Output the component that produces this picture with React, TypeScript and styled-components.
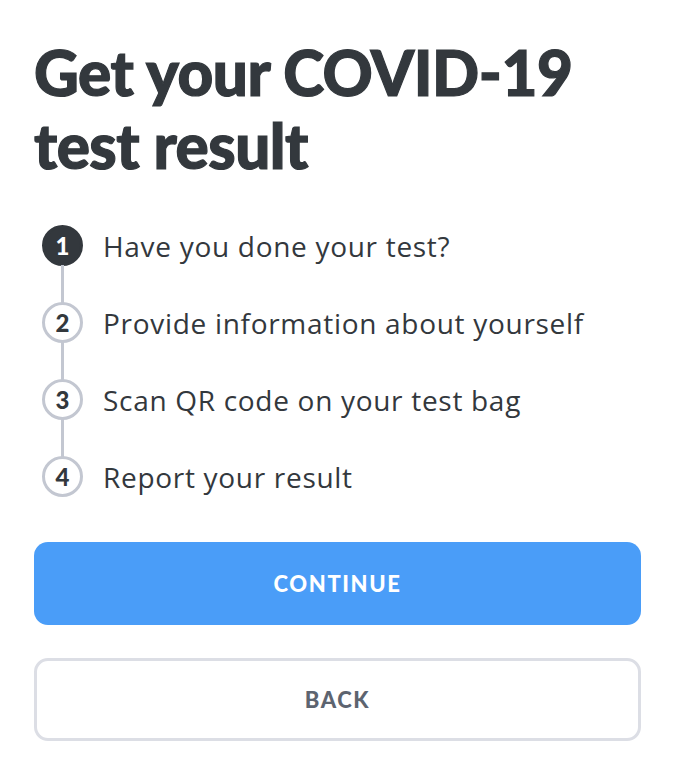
import React from "react";
import styled, { createGlobalStyle } from "styled-components";

const GlobalStyle = createGlobalStyle`
  html, body {
    margin: 0;
    padding: 0;
    background: #ffffff;
  }
  body {
    font-family: Lato, "Open Sans", sans-serif;
    color: #33383d;
  }
`;

const steps = [
  "Have you done your test?",
  "Provide information about yourself",
  "Scan QR code on your test bag",
  "Report your result",
];

const App = () => (
  <>
    <GlobalStyle />
    <Page>
      <Title>Get your COVID-19 test result</Title>
      <StepList>
        {steps.map((label, i) => (
          <Step key={label} $last={i === steps.length - 1}>
            <StepBadge $active={i === 0}>{i + 1}</StepBadge>
            <StepLabel>{label}</StepLabel>
          </Step>
        ))}
      </StepList>
      <Actions>
        <Button $primary>Continue</Button>
        <Button>Back</Button>
      </Actions>
    </Page>
  </>
);

export default App;

const Page = styled.main`
  display: flex;
  flex-direction: column;
  padding: 36px 45px 32px 34px;
`;

const Title = styled.h1`
  margin: 0;
  width: 560px;
  font-size: 62px;
  font-weight: 900;
  line-height: 73px;
  letter-spacing: -0.5px;
  color: #33383d;
  -webkit-text-stroke: 1.2px #33383d;
`;

const StepList = styled.ol`
  list-style: none;
  margin: 25px 0 0;
  padding: 0 0 0 8px;
  display: flex;
  flex-direction: column;
`;

const Step = styled.li<{ $last?: boolean }>`
  position: relative;
  display: flex;
  align-items: center;
  gap: 20px;
  height: 77px;

  &::after {
    content: "";
    display: ${(p) => (p.$last ? "none" : "block")};
    position: absolute;
    left: 19px;
    top: 58px;
    width: 3px;
    height: 40px;
    background: #c3c7d1;
  }
`;

const StepBadge = styled.span<{ $active?: boolean }>`
  box-sizing: border-box;
  flex: none;
  width: 41px;
  height: 41px;
  border-radius: 50%;
  display: flex;
  align-items: center;
  justify-content: center;
  font-size: 24px;
  font-weight: 900;
  background: ${(p) => (p.$active ? "#33383d" : "#ffffff")};
  color: ${(p) => (p.$active ? "#ffffff" : "#33383d")};
  border: 3px solid ${(p) => (p.$active ? "#33383d" : "#c3c7d1")};
`;

const StepLabel = styled.span`
  font-family: "Open Sans", Lato, sans-serif;
  font-size: 28px;
  font-weight: 400;
  letter-spacing: 0.7px;
  color: #33383d;
`;

const Actions = styled.div`
  display: flex;
  flex-direction: column;
  gap: 33px;
  margin-top: 27px;
`;

const Button = styled.button<{ $primary?: boolean }>`
  box-sizing: border-box;
  height: 83px;
  width: 100%;
  border-radius: 14px;
  font-family: Lato, "Open Sans", sans-serif;
  font-size: 22px;
  font-weight: 900;
  letter-spacing: 1.6px;
  text-transform: uppercase;
  cursor: pointer;
  background: ${(p) => (p.$primary ? "#4a9df8" : "#ffffff")};
  color: ${(p) => (p.$primary ? "#ffffff" : "#5d6470")};
  border: ${(p) => (p.$primary ? "none" : "3px solid #dcdee5")};
`;
